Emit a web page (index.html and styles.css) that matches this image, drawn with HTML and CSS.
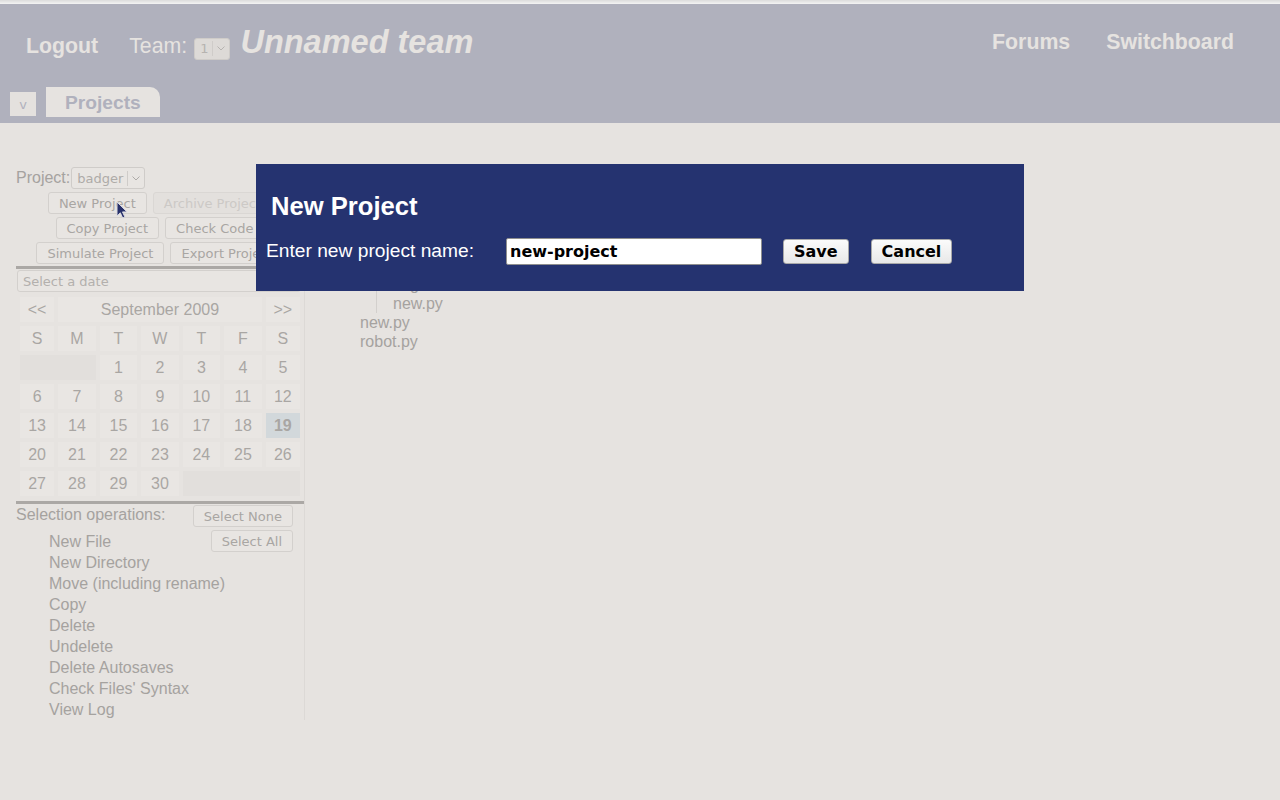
FILE: index.html
```html
<!DOCTYPE html>
<html>
<head>
<meta charset="utf-8">
<title>Projects</title>
<link rel="stylesheet" href="styles.css">
</head>
<body>
<div class="topbar"></div>
<header class="hdr">
  <div class="hdr-top">
    <div class="hdr-left">
      <a class="logout">Logout</a>
      <span class="team">Team:</span>
      <span class="select team-sel">1<span class="sel-div"></span><svg class="chev" width="8" height="5" viewBox="0 0 8 5"><path d="M0.5 0.5 L4 4 L7.5 0.5" fill="none" stroke="currentColor" stroke-width="1"/></svg></span>
      <span class="team-name">Unnamed team</span>
    </div>
    <nav class="hdr-nav"><a>Forums</a><a>Switchboard</a></nav>
  </div>
  <div class="tabs"><span class="tab-v">v</span><span class="tab">Projects</span></div>
</header>
<main class="main">
  <aside class="panel">
    <div class="proj-row"><span>Project:</span><span class="select proj-sel">badger<span class="sel-div"></span><svg class="chev" width="8" height="5" viewBox="0 0 8 5"><path d="M0.5 0.5 L4 4 L7.5 0.5" fill="none" stroke="currentColor" stroke-width="1"/></svg></span></div>
    <div class="btn-rows">
      <div class="btn-row"><button class="btn">New Project</button><button class="btn dis">Archive Project</button></div>
      <div class="btn-row"><button class="btn">Copy Project</button><button class="btn">Check Code</button></div>
      <div class="btn-row"><button class="btn">Simulate Project</button><button class="btn">Export Project</button></div>
    </div>
    <div class="rule"></div>
    <input class="date" placeholder="Select a date">
    <table class="cal">
      <tr><td>&lt;&lt;</td><td colspan="5">September 2009</td><td>&gt;&gt;</td></tr>
      <tr><td>S</td><td>M</td><td>T</td><td>W</td><td>T</td><td>F</td><td>S</td></tr>
      <tr><td colspan="2" class="empty"></td><td>1</td><td>2</td><td>3</td><td>4</td><td>5</td></tr>
      <tr><td>6</td><td>7</td><td>8</td><td>9</td><td>10</td><td>11</td><td>12</td></tr>
      <tr><td>13</td><td>14</td><td>15</td><td>16</td><td>17</td><td>18</td><td class="today">19</td></tr>
      <tr><td>20</td><td>21</td><td>22</td><td>23</td><td>24</td><td>25</td><td>26</td></tr>
      <tr><td>27</td><td>28</td><td>29</td><td>30</td><td colspan="3" class="empty"></td></tr>
    </table>
    <div class="rule r2"></div>
    <div class="sel-ops">
      <div class="sel-btns"><button class="btn">Select None</button><button class="btn">Select All</button></div>
      <div class="sel-title">Selection operations:</div>
      <ul class="ops">
        <li>New File</li>
        <li>New Directory</li>
        <li>Move (including rename)</li>
        <li>Copy</li>
        <li>Delete</li>
        <li>Undelete</li>
        <li>Delete Autosaves</li>
        <li>Check Files' Syntax</li>
        <li>View Log</li>
      </ul>
    </div>
  </aside>
  <section class="tree">
    <ul class="tree-sub">
      <li>img</li>
      <li>new.py</li>
    </ul>
    <ul class="tree-root">
      <li>new.py</li>
      <li>robot.py</li>
    </ul>
  </section>
</main>
<div class="dialog">
  <h2 class="dlg-title">New Project</h2>
  <div class="dlg-row">
    <label class="dlg-label">Enter new project name:</label>
    <input class="dlg-input" value="new-project">
    <button class="dlg-btn save">Save</button>
    <button class="dlg-btn cancel">Cancel</button>
  </div>
</div>
<svg class="cursor" width="13" height="19" viewBox="0 0 13 19"><path d="M1 1 L1 15 L4.3 11.8 L6.7 17 L8.9 16 L6.5 10.9 L11 10.9 Z" fill="#27306a" stroke="#d8d8e0" stroke-width="1"/></svg>
</body>
</html>
```

FILE: styles.css
```css
body {
  margin: 0;
  background: #e6e3e0;
  font-family: "Liberation Sans", Arial, sans-serif;
  color: #a5a29f;
}

.topbar {
  height: 4px;
  background: linear-gradient(#dcdcdc, #f4f4f4);
}

.hdr {
  background: #b0b1bd;
  height: 119px;
}

.hdr-top {
  display: flex;
  justify-content: space-between;
  align-items: flex-start;
  height: 83px;
  padding: 0 46px 0 26px;
  box-sizing: border-box;
}

.hdr-left {
  display: flex;
  align-items: baseline;
  margin-top: 20px;
}

.logout {
  font-weight: bold;
  font-size: 21.3px;
  color: #e6e3e0;
  margin-right: 31px;
}

.team {
  font-size: 21.3px;
  color: #e6e3e0;
  margin-right: 7px;
}

.team-name {
  font-weight: bold;
  font-style: italic;
  font-size: 32.5px;
  color: #e6e3e0;
  margin-left: 10px;
}

.hdr-nav {
  display: flex;
  gap: 36px;
  margin-top: 26px;
  font-weight: bold;
  font-size: 21.3px;
  color: #e6e3e0;
}

.tabs {
  display: flex;
  align-items: flex-end;
  gap: 10px;
  padding-left: 10px;
  height: 30px;
}

.tab-v {
  width: 26px;
  height: 24px;
  margin-bottom: 1px;
  background: #e4e1de;
  color: #b0b1bd;
  font-family: "DejaVu Sans", sans-serif;
  font-size: 13px;
  display: flex;
  align-items: center;
  justify-content: center;
}

.tab {
  width: 114px;
  height: 30px;
  box-sizing: border-box;
  padding: 1px 0 0 19px;
  background: #e6e3e0;
  border-radius: 0 10px 0 0;
  font-weight: bold;
  font-size: 19.2px;
  line-height: 29px;
  color: #b0b1bd;
}

.select {
  display: inline-flex;
  align-items: center;
  height: 22px;
  box-sizing: border-box;
  border: 1px solid #cfccc9;
  border-radius: 3px;
  background: #e8e5e2;
  font-family: "DejaVu Sans", sans-serif;
  font-size: 13px;
  color: #aeaba8;
  padding: 0 4px 0 5px;
}

.team-sel {
  background: #dddad7;
  border-color: #cfccc9;
  color: #b6b3b0;
}

.sel-div {
  width: 1px;
  height: 15px;
  background: #cfccc9;
  margin: 0 4px;
}

.chev {
  display: block;
}

.main {
  display: flex;
  align-items: flex-start;
  padding-top: 44px;
}

.panel {
  width: 288px;
  margin-left: 16px;
  border-right: 1px solid #dcd9d6;
}

.proj-row {
  display: flex;
  align-items: center;
  height: 22px;
  font-size: 16px;
}

.proj-sel {
  margin-left: 1px;
}

.btn-rows {
  display: flex;
  flex-direction: column;
  gap: 3px;
  margin-top: 3px;
}

.btn-row {
  display: flex;
  justify-content: center;
  gap: 6px;
}

.btn {
  height: 22px;
  box-sizing: border-box;
  padding: 0 10px;
  border: 1px solid #d3d0cd;
  border-radius: 3px;
  background: #e8e5e2;
  font-family: "DejaVu Sans", sans-serif;
  font-size: 13px;
  color: #a9a6a3;
}

.btn.dis {
  color: #ccc9c6;
  background: #e3e0dd;
  border-color: #dad7d4;
}

.rule {
  height: 3px;
  background: #aba8a5;
  margin-top: 2px;
}

.rule.r2 {
  margin-top: 1px;
}

.date {
  display: block;
  margin: 1px 0 0 1px;
  width: 284px;
  height: 22px;
  box-sizing: border-box;
  border: 1px solid #d3d0cd;
  border-radius: 3px;
  background: #e8e5e2;
  font-family: "DejaVu Sans", sans-serif;
  font-size: 13px;
  padding: 0 5px;
  color: #aeaba8;
}

.date::placeholder {
  color: #b3b0ad;
}

.cal {
  width: 288px;
  border-spacing: 4px;
  margin-top: 1px;
  font-size: 16px;
  color: #a9a6a3;
}

.cal td {
  height: 25px;
  padding: 0;
  text-align: center;
  background: #e9e6e3;
  line-height: 25px;
}

.cal td.empty {
  background: #e2dfdc;
}

.cal td.today {
  background: #d2d8db;
  font-weight: bold;
}

.sel-ops {
  font-size: 16px;
}

.sel-btns {
  float: right;
  display: flex;
  flex-direction: column;
  align-items: flex-end;
  gap: 3px;
  margin: 1px 11px 0 0;
}

.sel-title {
  line-height: 21px;
}

.ops {
  list-style: none;
  margin: 6px 0 0;
  padding: 0 0 0 33px;
  line-height: 21px;
}

.tree {
  padding: 108px 0 0 55px;
  font-size: 16px;
}

.tree-root,
.tree-sub {
  list-style: none;
  margin: 0;
  padding: 0;
  line-height: 19px;
}

.tree-sub {
  margin-left: 16px;
  padding-left: 16px;
  border-left: 1px solid #d3d0cd;
}

.dialog {
  position: absolute;
  left: 256px;
  top: 164px;
  width: 768px;
  height: 127px;
  box-sizing: border-box;
  padding: 28px 0 0 10px;
  background: #253370;
  color: #ffffff;
}

.dlg-title {
  margin: 0 0 0 5px;
  font-size: 25.6px;
  font-weight: bold;
  line-height: 29px;
}

.dlg-row {
  display: flex;
  align-items: baseline;
  margin-top: 17px;
}

.dlg-label {
  font-size: 19.2px;
  margin-right: 32px;
}

.dlg-input {
  width: 256px;
  height: 27px;
  box-sizing: border-box;
  border: 1px solid #8f8f8f;
  border-radius: 2px;
  padding: 0 3px;
  background: #ffffff;
  font-family: "DejaVu Sans", sans-serif;
  font-weight: bold;
  font-size: 16px;
  color: #000000;
}

.dlg-btn {
  height: 25px;
  box-sizing: border-box;
  padding: 0 10px;
  border: 1px solid #a8a8a8;
  border-radius: 3px;
  background: linear-gradient(#fbfbfb, #e8e8e8);
  font-family: "DejaVu Sans", sans-serif;
  font-weight: bold;
  font-size: 16px;
  color: #000000;
}

.save {
  margin-left: 21px;
}

.cancel {
  margin-left: 22px;
}

.cursor {
  position: absolute;
  left: 116px;
  top: 201px;
}
```
